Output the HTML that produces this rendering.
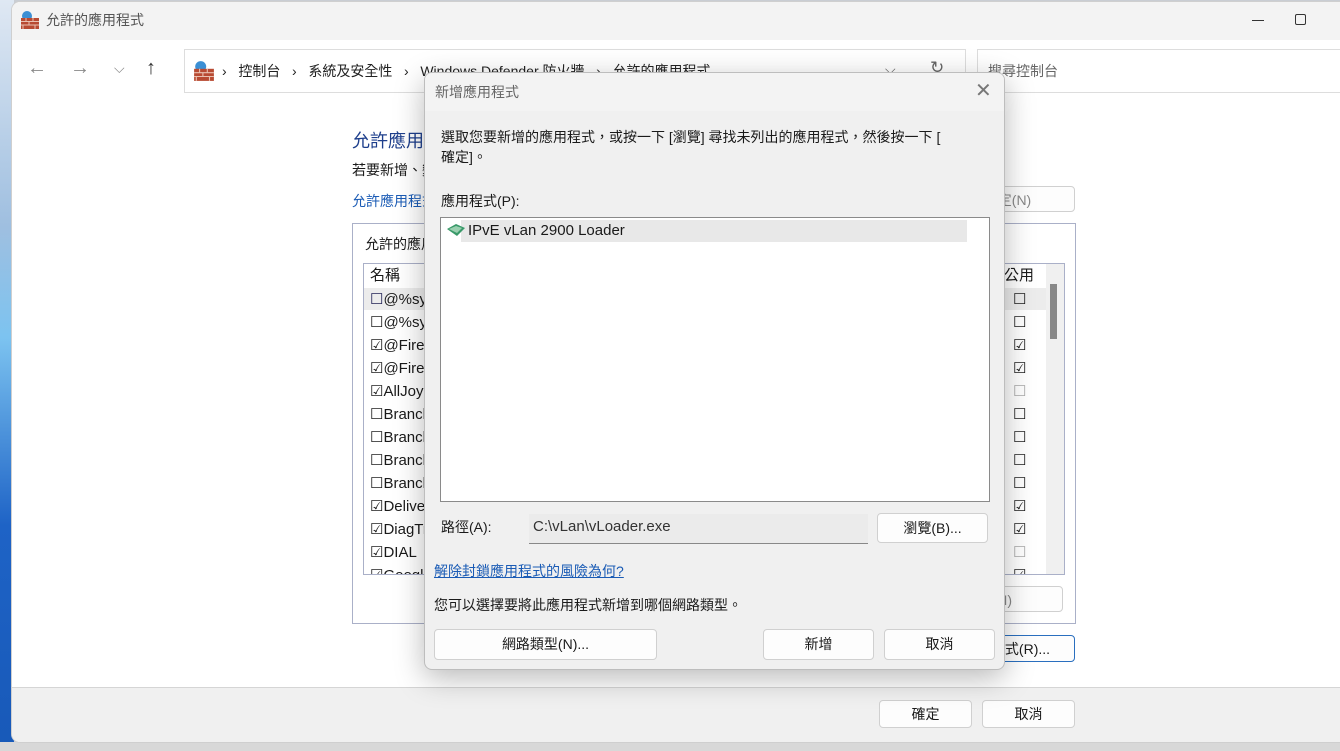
<!DOCTYPE html>
<html><head><meta charset="utf-8"><style>
*{box-sizing:border-box;margin:0;padding:0}
body{width:1340px;height:751px;overflow:hidden;position:relative;background:#c9cdd3;font-family:"Segoe UI","Liberation Sans","Noto Sans CJK TC",sans-serif;font-size:14px;color:#1a1a1a}
.a{position:absolute}
.desk{left:0;top:0;width:14px;height:751px;background:linear-gradient(#dfe8f3,#9fbfe0 30%,#7cc3f0 45%,#1e63c6 70%,#1859b8)}
.bot{left:0;top:742px;width:1340px;height:9px;background:#d8d8d8}
.win{left:12px;top:2px;width:1328px;height:740px;background:#fff;border-radius:8px 0 0 8px;overflow:hidden;box-shadow:0 0 0 1px #cfcfcf}
.t{white-space:nowrap}
.btn{position:absolute;background:#fdfdfd;border:1px solid #d0d0d0;border-radius:4px;text-align:center;font-size:14px;line-height:26px}
.row{position:absolute;left:0;height:23px;font-size:15px;line-height:23px;white-space:nowrap}
</style></head><body>
<div class="a desk"></div><div class="a bot"></div>
<div class="a win">
 <div class="a" style="left:0;top:0;width:1330px;height:38px;background:#f3f3f3"></div>
 <svg class="a" style="left:8px;top:8px" width="20" height="20" viewBox="0 0 20 20"><circle cx="7" cy="6" r="5" fill="#3b8fd4"/><rect x="1" y="8" width="18" height="11" fill="#b84a32"/><path d="M1 11.5h18M1 15h18M6 8v3.5M13 8v3.5M9 11.5v3.5M3 15v4M15 15v4" stroke="#e9c0b0" stroke-width="1"/></svg>
 <div class="a t" style="left:34px;top:8px;font-size:14px;color:#555">允許的應用程式</div>
 <div class="a" style="left:1240px;top:18px;width:12px;height:1px;background:#333"></div>
 <div class="a" style="left:1283px;top:12px;width:11px;height:11px;border:1px solid #333;border-radius:2px"></div>
 <div class="a t" style="left:15px;top:55px;font-size:20px;color:#888">←</div>
 <div class="a t" style="left:58px;top:55px;font-size:20px;color:#888">→</div>
 <div class="a t" style="left:102px;top:58px;font-size:14px;color:#888">⌵</div>
 <div class="a t" style="left:134px;top:55px;font-size:20px;color:#333">↑</div>
 <div class="a" style="left:172px;top:47px;width:782px;height:44px;border:1px solid #ddd"></div>
 <svg class="a" style="left:181px;top:58px" width="22" height="22" viewBox="0 0 20 20"><circle cx="7" cy="6" r="5" fill="#3b8fd4"/><rect x="1" y="8" width="18" height="11" fill="#b84a32"/><path d="M1 11.5h18M1 15h18M6 8v3.5M13 8v3.5M9 11.5v3.5M3 15v4M15 15v4" stroke="#e9c0b0" stroke-width="1"/></svg>
 <div class="a t" style="left:210px;top:59px;font-size:14px;color:#222">›&nbsp;&nbsp; 控制台 &nbsp;&nbsp;›&nbsp;&nbsp; 系統及安全性 &nbsp;&nbsp;›&nbsp;&nbsp; Windows Defender 防火牆 &nbsp;&nbsp;›&nbsp;&nbsp; 允許的應用程式</div>
 <div class="a t" style="left:873px;top:59px;color:#666">⌵</div>
 <div class="a t" style="left:918px;top:56px;font-size:17px;color:#666">↻</div>
 <div class="a" style="left:965px;top:47px;width:370px;height:44px;border:1px solid #ddd"></div>
 <div class="a t" style="left:976px;top:59px;color:#666">搜尋控制台</div>
 <div class="a t" style="left:340px;top:125px;font-size:18px;color:#1e3f8c">允許應用程式透過 Windows Defender 防火牆通訊</div>
 <div class="a t" style="left:340px;top:158px;font-size:14px">若要新增、變更或移除允許的應用程式和連接埠，請按一下 [變更設定]。</div>
 <div class="a t" style="left:340px;top:189px;font-size:14px;color:#1a5bb5">允許應用程式通訊的風險為何?</div>
 <div class="btn" style="left:900px;top:184px;width:163px;height:26px;color:#888">變更設定(N)</div>
 <div class="a" style="left:340px;top:221px;width:724px;height:401px;border:1px solid #aab0c8"></div>
 <div class="a t" style="left:353px;top:232px;font-size:14px">允許的應用程式和功能(A):</div>
 <div class="a" style="left:351px;top:261px;width:702px;height:312px;border:1px solid #aab0c8;overflow:hidden;background:#fff">
  <div class="row" style="left:6px;top:0">名稱</div>
  <div class="row" style="left:640px;top:0">公用</div>
  <div class="a" style="left:0;top:24px;width:682px;height:22px;background:#ececec"></div>
  <div class="a" style="left:682px;top:0;width:19px;height:311px;background:#f0f0f0"></div>
  <div class="a" style="left:686px;top:20px;width:7px;height:55px;background:#888"></div>
 </div>
 <div class="btn" style="left:900px;top:584px;width:151px;height:26px;color:#888">移除(M)</div>
 <div class="btn" style="left:870px;top:633px;width:193px;height:27px;border-color:#2a6fbf">允許其他應用程式(R)...</div>
 <div class="a" style="left:0;top:685px;width:1330px;height:56px;background:#f0f0f0;border-top:1px solid #d5d5d5"></div>
 <div class="btn" style="left:867px;top:698px;width:93px;height:28px">確定</div>
 <div class="btn" style="left:970px;top:698px;width:93px;height:28px">取消</div>
</div>
<div class="a" style="left:370px;top:288px;width:54px;height:286px;overflow:hidden;font-size:15px">
 <div class="row" style="top:0"><span style="color:#225">☐</span>@%systemroot%</div>
 <div class="row" style="top:23px">☐@%systemroot%</div>
 <div class="row" style="top:46px">☑@FirewallAPI</div>
 <div class="row" style="top:69px">☑@FirewallAPI</div>
 <div class="row" style="top:92px">☑AllJoyn</div>
 <div class="row" style="top:115px">☐Branch</div>
 <div class="row" style="top:138px">☐Branch</div>
 <div class="row" style="top:161px">☐Branch</div>
 <div class="row" style="top:184px">☐Branch</div>
 <div class="row" style="top:207px">☑Delivery</div>
 <div class="row" style="top:230px">☑DiagTrack</div>
 <div class="row" style="top:253px">☑DIAL</div>
 <div class="row" style="top:276px">☑Google</div>
</div>
<div class="a" style="left:1013px;top:288px;width:16px;height:286px;overflow:hidden">
 <div class="row" style="top:0">☐</div><div class="row" style="top:23px">☐</div><div class="row" style="top:46px">☑</div><div class="row" style="top:69px">☑</div><div class="row" style="top:92px;color:#aaa">☐</div><div class="row" style="top:115px">☐</div><div class="row" style="top:138px">☐</div><div class="row" style="top:161px">☐</div><div class="row" style="top:184px">☐</div><div class="row" style="top:207px">☑</div><div class="row" style="top:230px">☑</div><div class="row" style="top:253px;color:#aaa">☐</div><div class="row" style="top:276px">☑</div>
</div>
<div class="a" style="left:424px;top:72px;width:581px;height:598px;background:#f0f0f0;border:1px solid #bdbdbd;border-radius:8px;box-shadow:0 8px 30px rgba(0,0,0,.28);overflow:hidden">
 <div class="a" style="left:0;top:0;width:581px;height:38px;background:#f3f3f3"></div>
 <div class="a t" style="left:10px;top:9px;font-size:14px;color:#666">新增應用程式</div>
 <div class="a t" style="left:550px;top:5px;font-size:20px;color:#777;font-weight:300">✕</div>
 <div class="a t" style="left:16px;top:54px;font-size:14px;line-height:20px">選取您要新增的應用程式，或按一下 [瀏覽] 尋找未列出的應用程式，然後按一下 [<br>確定]。</div>
 <div class="a t" style="left:16px;top:118px">應用程式(P):</div>
 <div class="a" style="left:15px;top:144px;width:550px;height:285px;background:#fff;border:1px solid #8a8a8a">
  <div class="a" style="left:20px;top:2px;width:506px;height:22px;background:#e8e8e8"></div>
  <svg class="a" style="left:5px;top:5px" width="20" height="14" viewBox="0 0 20 14"><path d="M1 6L10 1L19 5L11 13Z" fill="#3a9a6a"/><path d="M3 6L10 3L16 5L11 10Z" fill="#9ad0b0"/></svg>
  <div class="a t" style="left:27px;top:2px;font-size:15px;line-height:22px">IPvE vLan 2900 Loader</div>
 </div>
 <div class="a t" style="left:16px;top:444px">路徑(A):</div>
 <div class="a" style="left:104px;top:441px;width:339px;height:30px;background:#ebebeb;border-bottom:1px solid #888"></div>
 <div class="a t" style="left:108px;top:445px;font-size:15px;color:#333">C:\vLan\vLoader.exe</div>
 <div class="btn" style="left:452px;top:440px;width:111px;height:30px;line-height:28px">瀏覽(B)...</div>
 <div class="a t" style="left:9px;top:488px;color:#1a5bb5;text-decoration:underline">解除封鎖應用程式的風險為何?</div>
 <div class="a t" style="left:9px;top:522px">您可以選擇要將此應用程式新增到哪個網路類型。</div>
 <div class="btn" style="left:9px;top:556px;width:223px;height:31px;line-height:29px">網路類型(N)...</div>
 <div class="btn" style="left:338px;top:556px;width:111px;height:31px;line-height:29px">新增</div>
 <div class="btn" style="left:459px;top:556px;width:111px;height:31px;line-height:29px">取消</div>
</div>
</body></html>
